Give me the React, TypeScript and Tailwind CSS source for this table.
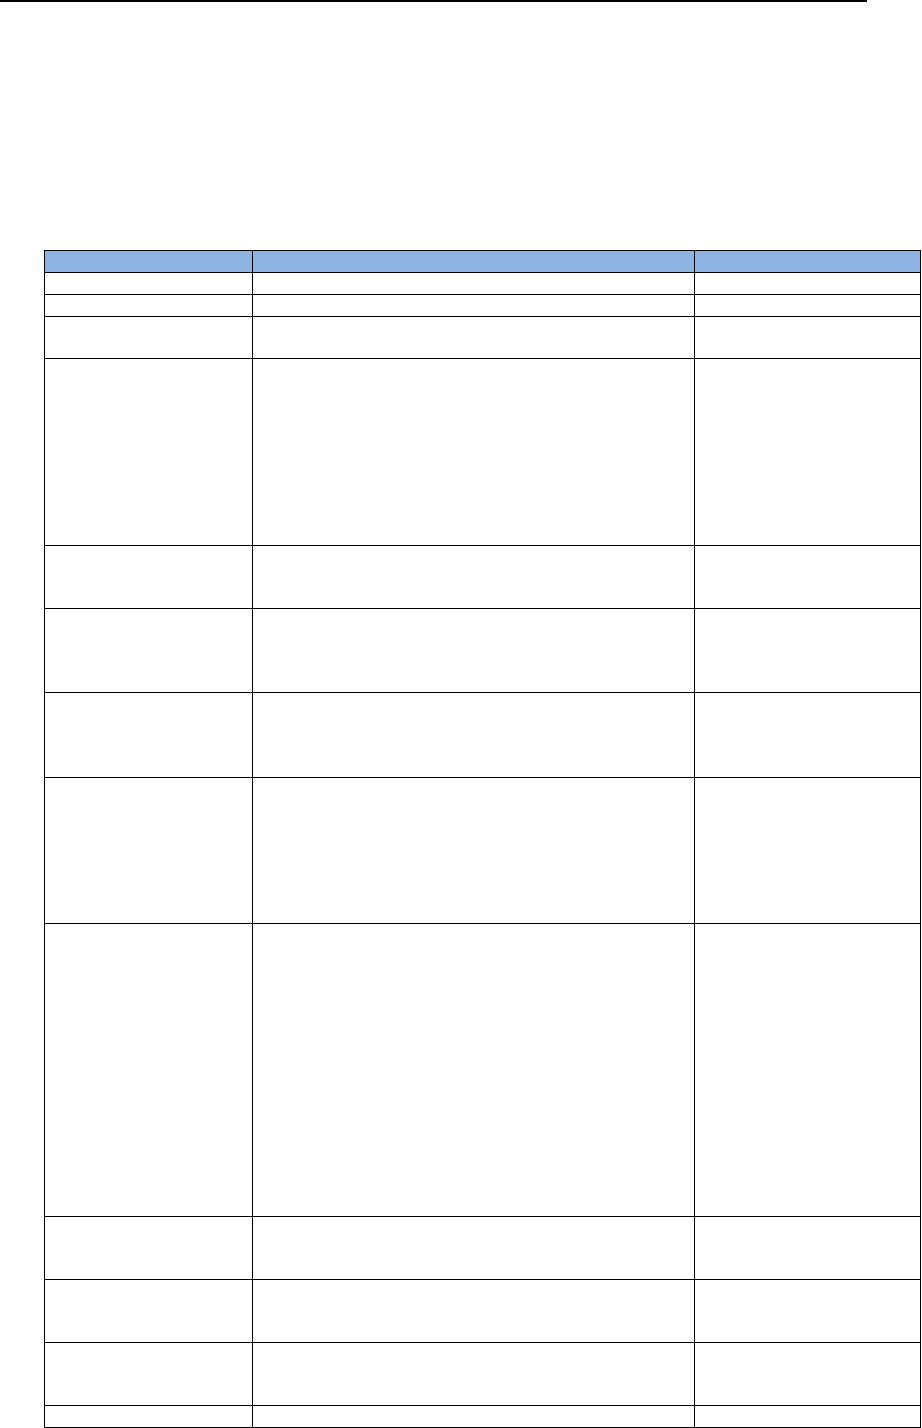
const rows = [
  "h-[22px]",
  "h-[22px]",
  "h-[42px]",
  "h-[187px]",
  "h-[63px]",
  "h-[84px]",
  "h-[85px]",
  "h-[146px]",
  "h-[293px]",
  "h-[63px]",
  "h-[63px]",
  "h-[63px]",
  "h-[22px]",
];

const Cells = ({ h, header = false }: { h: string; header?: boolean }) => {
  const bg = header ? "bg-[#8db3e2]" : "bg-white";
  return (
    <>
      <div className={`${h} ${bg} border-r border-b border-black`}></div>
      <div className={`${h} ${bg} border-r border-b border-black`}></div>
      <div className={`${h} ${bg} border-r border-b border-black`}></div>
    </>
  );
};

const App = () => {
  return (
    <div className="w-[922px] h-[1428px] bg-white overflow-hidden font-['Liberation_Sans',sans-serif]">
      <div className="w-[867px] h-[2px] bg-black"></div>
      <div className="ml-[44px] mt-[248px] w-[877px] grid grid-cols-[208px_442px_226px] border-l border-t border-black">
        <Cells h="h-[22px]" header />
        {rows.map((h, i) => (
          <Cells key={i} h={h} />
        ))}
      </div>
    </div>
  );
};

export default App;
